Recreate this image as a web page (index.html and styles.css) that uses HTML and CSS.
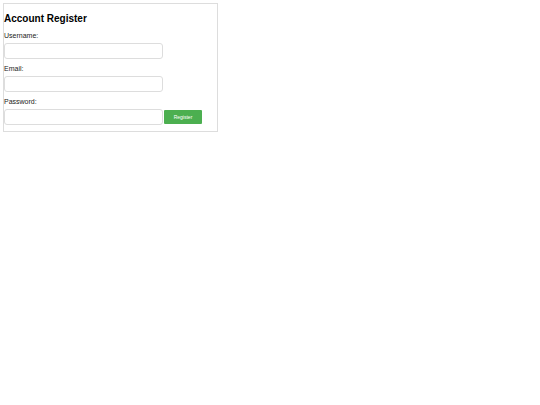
FILE: index.html
```html
<!DOCTYPE html>
<html>
<head>
<meta charset="utf-8">
<link rel="stylesheet" href="styles.css">
</head>
<body>
<div class="card">
  <h2 class="title">Account Register</h2>
  <form class="form">
    <label class="label">Username:</label>
    <input class="field" type="text">
    <label class="label">Email:</label>
    <input class="field" type="email">
    <label class="label">Password:</label>
    <div class="row">
      <input class="field" type="password">
      <button class="btn" type="button">Register</button>
    </div>
  </form>
</div>
</body>
</html>
```

FILE: styles.css
```css
html, body { margin: 0; padding: 0; background: #fff; }
body { padding: 3px; font-family: "Liberation Sans", Arial, sans-serif; color: #000; }
.card {
  width: 213px;
  border: 1px solid #ddd;
  padding: 0 0 6px 0;
}
.title {
  font-size: 10px;
  font-weight: bold;
  margin: 8px 0 1px 0;
  line-height: 13px;
}
.form { display: flex; flex-direction: column; }
.label {
  font-size: 7px;
  line-height: 8px;
  margin-top: 6px;
  margin-bottom: 3px;
  color: #222;
}
.field {
  box-sizing: border-box;
  width: 159px;
  height: 16px;
  border: 1px solid #ddd;
  border-radius: 3px;
  margin: 0;
  padding: 0 3px;
  font-size: 7px;
  background: #fff;
}
.row { display: flex; align-items: center; gap: 1px; }
.btn {
  box-sizing: border-box;
  width: 38px;
  height: 14px;
  background: #4caf50;
  color: #fff;
  border: none;
  border-radius: 1px;
  font-family: "Liberation Sans", Arial, sans-serif;
  font-size: 5px;
  padding: 0;
}
```
